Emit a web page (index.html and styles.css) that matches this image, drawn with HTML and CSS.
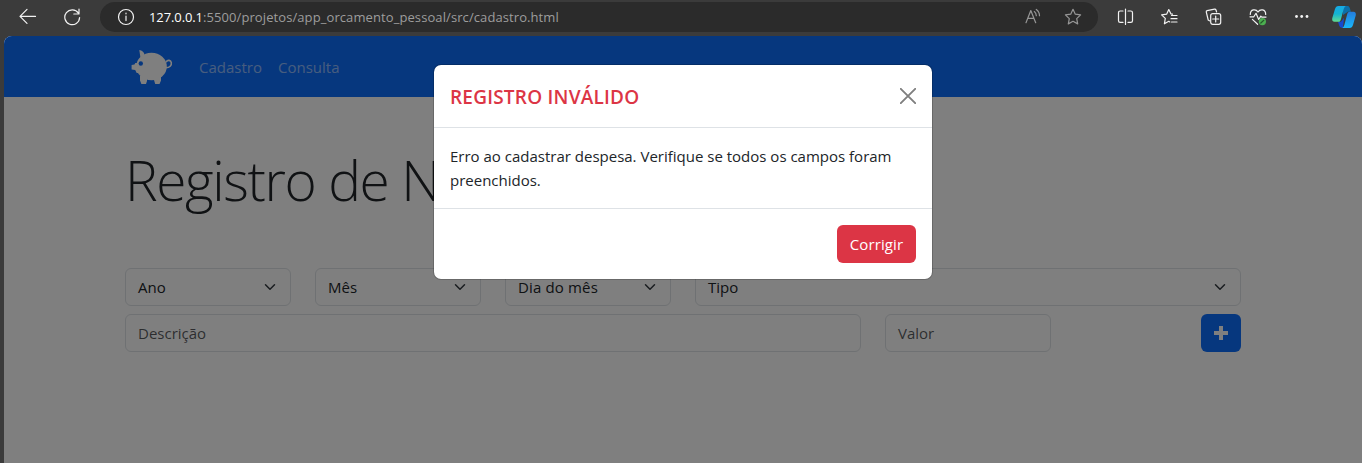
FILE: index.html
```html
<!DOCTYPE html>
<html lang="pt-BR">
<head>
<meta charset="utf-8">
<title>Orçamento Pessoal</title>
<link rel="stylesheet" href="styles.css">
</head>
<body>
<div class="browser">
  <header class="toolbar">
    <div class="nav-buttons">
      <svg class="icon" viewBox="0 0 18 18"><path d="M16.500 8.400H1.500M8 1.400l-7 7 7 7"/></svg>
      <svg class="icon" viewBox="0 0 18 18"><path d="M15.400 5.200A7.400 7.400 0 1 0 16.600 9.500M16 1v5h-5.200"/></svg>
    </div>
    <div class="address">
      <svg class="icon info" viewBox="0 0 18 18"><circle cx="9" cy="9" r="7.5"/><path d="M9 8v4.600M9 5v.8"/></svg>
      <span class="url"><span class="host">127.0.0.1</span><span class="path">:5500/projetos/app_orcamento_pessoal/src/cadastro.html</span></span>
      <svg class="icon dim read" viewBox="0 0 18 18"><path d="M2 14.700L6.800 2.500l4.900 12.200M3.800 10.300H10M10.300 3.600c1.200.9 1.900 2.300 2 4.100M12.300 1.400c2 1.400 3.200 3.500 3.200 6.300"/></svg>
      <svg class="icon dim" viewBox="0 0 18 18"><path d="M9 1.300l2.300 4.900 5.300.7-3.900 3.700 1 5.300L9 13.300l-4.700 2.600 1-5.300-3.900-3.700 5.300-.7z"/></svg>
    </div>
    <div class="actions">
      <svg class="icon" viewBox="0 0 18 18"><path d="M8.500 1v15.500M6 3H3.200Q1.500 3 1.500 4.700v8q0 1.700 1.700 1.700H6M11 3h2.800q1.700 0 1.700 1.700v8q0 1.700-1.700 1.700H11"/></svg>
      <svg class="icon" viewBox="0 0 18 18"><path d="M11.500 6.200L10 6 7.800 1.600 5.600 6.200.6 6.900l3.700 3.500-.9 5.400L7.800 13.300l1 .6M10.500 7.500H16M10 10.700h6M10.500 14H16"/></svg>
      <svg class="icon" viewBox="0 0 18 18"><path d="M4.400 12.800L3.200 12 1.300 4.200q-.3-1.200.8-1.500l7.400-1.500q1.100-.2 1.500.8l.6 2"/><rect x="5.700" y="5.700" width="10" height="10.600" rx="2"/><path d="M10.700 8v6M7.700 11h6"/></svg>
      <svg class="icon" viewBox="0 0 18 18"><path d="M1.300 6.400C1.300 1.200 6.800.5 9 4c2.200-3.500 7.700-2.800 7.700 2.400M1 8.800h3.800L7 5.300l2.700 6.200 2.100-3.400 1 1H17M3.400 11.400l5.200 4.900"/><circle class="ok" cx="13.400" cy="13.600" r="3.600"/><path class="check" d="M11.800 15l3-2.700"/></svg>
      <svg class="icon dots" viewBox="0 0 18 18"><circle cx="3.500" cy="8.500" r="1.400"/><circle cx="8.700" cy="8.500" r="1.400"/><circle cx="14" cy="8.500" r="1.400"/></svg>
    </div>
    <svg class="copilot" viewBox="0 0 24 24">
      <defs>
        <linearGradient id="g1" x1="0" y1="0" x2="0" y2="1"><stop offset="0" stop-color="#16a9e6"/><stop offset=".5" stop-color="#14b3d2"/><stop offset="1" stop-color="#62dc91"/></linearGradient>
        <linearGradient id="g2" x1="0" y1="0" x2="0" y2="1"><stop offset="0" stop-color="#247cdc"/><stop offset="1" stop-color="#19b7fa"/></linearGradient>
      </defs>
      <path fill="#0c6fa8" d="M11 1h4c2.500 0 3 2 3.800 5.700H16L11 10z"/>
      <path fill="#1549cf" d="M6 16.800h3l3-4-1 10H9.700c-2.400 0-2.700-3.200-3.700-6z"/>
      <path fill="url(#g1)" d="M6.500 1h8C12.400 1 11.800 3.500 11 6.500L9 14c-.6 2-1 2.800-3 2.800H2.500C.3 16.800-.1 15 .3 13L3 4c.7-2.100 1.500-3 3.500-3z"/>
      <path fill="url(#g2)" d="M17.500 23h-8c2.100 0 2.700-2.500 3.500-5.500l2-7.500c.6-2 1-3.200 3-3.200h3.500c2.200 0 2.600 1.800 2.200 3.800L21 20c-.7 2.100-1.500 3-3.500 3z"/>
    </svg>
  </header>

  <div class="viewport">
    <nav class="navbar">
      <div class="container nav-inner">
        <svg class="pig" viewBox="0 0 42 36">
          <g fill="#fff">
            <ellipse cx="20.500" cy="17.500" rx="15.300" ry="13.800"/>
            <path d="M8.300 1c2.700.4 4.600 2 5.200 4.400L9.500 9z"/>
            <path d="M7 14H4.300L3.500 15.500.6 16v4.600l3.600.4 1.500 3H9z"/>
            <path d="M9 27h7v5l-1 3h-4.600L9 31.500zM23.500 28l6.500-1v4.500L28.500 35h-4.300L23 31z"/>
          </g>
          <path class="tail" d="M34.500 18.700c4.300.2 6.300-2.500 5.800-5-.5-2.600-3.600-3.200-5-1"/>
          <circle fill="#0d6efd" cx="9.800" cy="14.500" r="2.200"/>
        </svg>
        <a class="nav-link">Cadastro</a>
        <a class="nav-link">Consulta</a>
      </div>
    </nav>
    <main class="container">
      <h1 class="title">Registro de N</h1>
      <div class="row">
        <div class="field select col-2"><span>Ano</span><svg viewBox="0 0 16 16"><path d="M2 5l6 6 6-6"/></svg></div>
        <div class="field select col-2"><span>Mês</span><svg viewBox="0 0 16 16"><path d="M2 5l6 6 6-6"/></svg></div>
        <div class="field select col-2"><span class="day">Dia do mês</span><svg viewBox="0 0 16 16"><path d="M2 5l6 6 6-6"/></svg></div>
        <div class="field select col-6"><span>Tipo</span><svg viewBox="0 0 16 16"><path d="M2 5l6 6 6-6"/></svg></div>
      </div>
      <div class="row">
        <div class="field hint col-8"><span>Descrição</span></div>
        <div class="field hint col-2"><span>Valor</span></div>
        <div class="col-2 end"><div class="add"><svg viewBox="0 0 14 14"><path d="M5 0h4v5h5v4H9v5H5V9H0V5h5z"/></svg></div></div>
      </div>
    </main>
    <div class="backdrop">
      <section class="modal">
        <div class="modal-header"><h5 class="modal-title">REGISTRO INVÁLIDO</h5><svg class="close" viewBox="0 0 16 16"><path d="M.8.8l14.400 14.400M15.200.8L.8 15.200"/></svg></div>
        <div class="modal-body">Erro ao cadastrar despesa. Verifique se todos os campos foram<br>preenchidos.</div>
        <div class="modal-footer"><button class="fix">Corrigir</button></div>
      </section>
    </div>
  </div>
</div>
</body>
</html>
```
FILE: styles.css
```css
* { box-sizing: border-box; }
body { margin: 0; background: #3b3b3b; font-family: "Open Sans", "Noto Sans", sans-serif; font-size: 15px; line-height: 24px; color: #212529; overflow: hidden; }
.browser { height: 463px; display: flex; flex-direction: column; }
.toolbar { height: 36px; flex: none; display: flex; align-items: flex-start; }
.nav-buttons { width: 100px; height: 34px; padding-left: 19px; display: flex; align-items: center; gap: 26px; }
.icon { width: 18px; height: 18px; flex: none; fill: none; stroke: #f2f2f2; stroke-width: 1.2; stroke-linecap: round; stroke-linejoin: round; }
.dim { stroke: #969696; }
.address { width: 998px; height: 30px; margin-top: 2px; padding: 0 16px 0 17px; border-radius: 15px; background: #2b2b2b; display: flex; align-items: center; }
.url { flex: 1; margin-left: 14px; font-size: 13px; white-space: nowrap; }
.host { color: #fff; letter-spacing: -.1px; }
.path { color: #9d9d9d; letter-spacing: .09px; }
.read { margin-right: 22px; }
.actions { height: 34px; margin-left: 19px; display: flex; align-items: center; gap: 26px; }
.dots { fill: #f2f2f2; stroke: none; }
.ok { fill: #4caf50; stroke: none; }
.check { stroke: #24572a; }
.copilot { width: 24px; height: 24px; margin: 5px 0 0 21px; flex: none; }
.viewport { position: relative; flex: 1; margin-left: 4px; border-radius: 8px 8px 0 0; overflow: hidden; background: #fff; }
.container { width: 1140px; margin: 0 auto; padding: 0 12px; }
.navbar { height: 61px; background: #0d6efd; }
.nav-inner { height: 61px; display: flex; align-items: center; }
.pig { width: 42px; height: 36px; margin: 0 26px 0 6px; }
.tail { fill: none; stroke: #fff; stroke-width: 1.6; stroke-linecap: round; }
.nav-link { width: 63px; margin-right: 16px; color: rgba(255,255,255,.55); white-space: nowrap; }
.title { margin: 0; padding-top: 49px; height: 171px; font-size: 55px; line-height: 68px; font-weight: 300; letter-spacing: -1.4px; white-space: nowrap; }
.row { display: grid; grid-template-columns: repeat(12, 71px); column-gap: 24px; margin-bottom: 8px; }
.col-2 { grid-column: span 2; }
.col-6 { grid-column: span 6; }
.col-8 { grid-column: span 8; }
.field { height: 38px; padding: 0 12px; border: 1px solid #dee2e6; border-radius: 6px; display: flex; align-items: center; justify-content: space-between; }
.day { letter-spacing: .15px; }
.select svg { width: 16px; height: 12px; fill: none; stroke: #343a40; stroke-width: 2; stroke-linecap: round; stroke-linejoin: round; }
.hint { color: rgba(33,37,41,.75); }
.end { display: flex; justify-content: flex-end; }
.add { width: 40px; height: 38px; border-radius: 6px; background: #0d6efd; display: flex; align-items: center; justify-content: center; }
.add svg { width: 14px; height: 14px; fill: #fff; }
.backdrop { position: absolute; inset: 0; background: rgba(0,0,0,.5); display: flex; justify-content: center; align-items: flex-start; }
.modal { width: 500px; margin-top: 28px; border: 1px solid rgba(0,0,0,.175); border-radius: 8px; background: #fff; background-clip: padding-box; }
.modal-header { height: 63px; padding: 0 16px; display: flex; align-items: center; justify-content: space-between; border-bottom: 1px solid #dee2e6; }
.modal-title { margin: 0; padding-top: 2px; font-size: 19px; font-weight: 600; letter-spacing: .22px; color: #dc3545; white-space: nowrap; }
.close { width: 16px; height: 16px; fill: none; stroke: #7f7f7f; stroke-width: 1.9; stroke-linecap: round; }
.modal-body { height: 80px; padding: 16px; white-space: nowrap; }
.modal-footer { height: 71px; padding: 0 16px; border-top: 1px solid #dee2e6; display: flex; align-items: center; justify-content: flex-end; }
.fix { width: 79px; height: 38px; padding: 0; border: 0; border-radius: 6px; background: #dc3545; color: #fff; font: inherit; letter-spacing: .1px; }
```
